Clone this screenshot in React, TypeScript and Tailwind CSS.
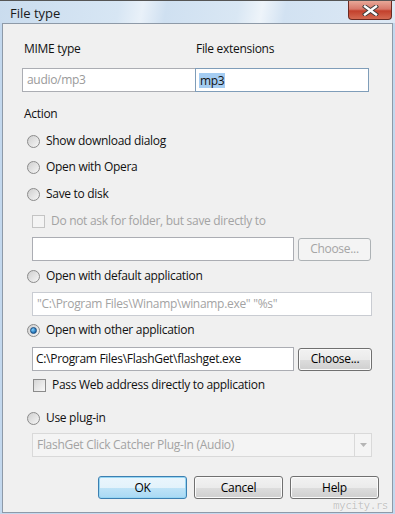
import React from 'react';

const font = "font-['Open_Sans',sans-serif]";

const Radio: React.FC<{ checked?: boolean }> = ({ checked }) => (
  <span className="relative flex h-[13px] w-[13px] shrink-0 items-center justify-center rounded-full border border-[#8b8b8b] bg-[linear-gradient(135deg,#cfcfcf,#f6f6f6)]">
    {checked && (
      <span className="h-[7px] w-[7px] rounded-full border border-[#1b4d80] bg-[radial-gradient(circle_at_35%_35%,#7fd0ff,#1f6fb2_70%)]" />
    )}
  </span>
);

const Check: React.FC<{ disabled?: boolean }> = ({ disabled }) => (
  <span
    className={`h-[13px] w-[13px] shrink-0 border ${
      disabled ? 'border-[#c4c4c4] bg-[#f4f4f4]' : 'border-[#8b8b8b] bg-[linear-gradient(135deg,#d6d6d6,#f8f8f8)]'
    }`}
  />
);

const Button: React.FC<{ label: string; disabled?: boolean; primary?: boolean; className?: string }> = ({
  label,
  disabled,
  primary,
  className = '',
}) => (
  <div
    className={`flex items-center justify-center rounded-[3px] border ${
      disabled
        ? 'border-[#adb2b5] bg-[#f4f4f4] text-[#a5a5a5]'
        : primary
        ? 'border-[#3c7fb1] bg-[linear-gradient(#eaf6fd_0%,#e3f2fb_50%,#bfe3f7_51%,#a9d9f4_100%)] text-black shadow-[inset_0_0_0_1px_#97d6f3]'
        : 'border-[#707070] bg-[linear-gradient(#f2f2f2_0%,#ebebeb_50%,#dddddd_51%,#cfcfcf_100%)] text-black shadow-[inset_0_0_0_1px_#fbfbfb]'
    } ${className}`}
  >
    {label}
  </div>
);

const RadioRow: React.FC<{ label: string; checked?: boolean; mt: string }> = ({ label, checked, mt }) => (
  <div className={`flex h-[16px] items-center ${mt} ml-[24px]`}>
    <Radio checked={checked} />
    <span className="ml-[6px] leading-none">{label}</span>
  </div>
);

export default function App() {
  return (
    <div className={`relative h-[514px] w-[395px] overflow-hidden bg-[#c3d8ee] text-[12px] tracking-[-0.3px] text-[#111] ${font}`}>
      {/* title bar */}
      <div className="flex h-[23px] items-start border-t border-[#555] bg-[linear-gradient(100deg,#cadcee_0%,#d7e6f4_30%,#e9f1f9_36%,#cfe0f1_42%,#d9e7f4_60%,#eef4fa_66%,#d2e2f2_72%,#dde9f5_100%)]">
        <span className="ml-[10px] mt-[6px] leading-none text-[13px] tracking-normal text-[#1a1a1a]">File type</span>
        <div className="ml-auto mr-[3px] flex h-[19px] w-[44px] items-center justify-center rounded-b-[4px] border border-t-0 border-[#6b2a22] bg-[linear-gradient(#e8a898_0%,#d7786a_45%,#c3402c_55%,#d46a52_100%)]">
          <svg width="17" height="11" viewBox="0 0 17 11">
            <path d="M3 1.5 L14 9.5 M14 1.5 L3 9.5" stroke="#3a3a3a" strokeWidth="4.2" strokeLinecap="square" />
            <path d="M3 1.5 L14 9.5 M14 1.5 L3 9.5" stroke="#ffffff" strokeWidth="2.4" strokeLinecap="square" />
          </svg>
        </div>
      </div>

      {/* body */}
      <div className="mx-[2px] flex h-[490px] flex-col border border-[#8e9aa8] bg-[#f0f0f0]">
        <div className="mt-[17px] flex h-[16px] items-center">
          <span className="ml-[21px] w-[172px] leading-none">MIME type</span>
          <span className="leading-none">File extensions</span>
        </div>

        <div className="ml-[19px] mt-[11px] flex h-[24px]">
          <div className="flex w-[173px] items-center border border-[#abadb3] border-r-0 bg-white pl-[4px] text-[#9a9a9a]">
            audio/mp3
          </div>
          <div className="flex w-[174px] items-center border border-[#7f9db9] bg-white pl-[3px]">
            <span className="bg-[#a5cdf2] px-[1px] leading-[15px]">mp3</span>
          </div>
        </div>

        <div className="ml-[21px] mt-[14px] flex h-[16px] items-center leading-none">Action</div>

        <RadioRow label="Show download dialog" mt="mt-[11px]" />
        <RadioRow label="Open with Opera" mt="mt-[10px]" />
        <RadioRow label="Save to disk" mt="mt-[11px]" />

        <div className="ml-[29px] mt-[11px] flex h-[16px] items-center text-[#a3a3a3]">
          <Check disabled />
          <span className="ml-[6px] leading-none">Do not ask for folder, but save directly to</span>
        </div>

        <div className="ml-[29px] mt-[8px] flex h-[24px] items-center">
          <div className="h-[24px] w-[262px] border border-[#abadb3] bg-white" />
          <Button label="Choose..." disabled className="ml-[4px] h-[23px] w-[73px]" />
        </div>

        <RadioRow label="Open with default application" mt="mt-[7px]" />

        <div className="ml-[29px] mt-[8px] flex h-[24px] w-[340px] items-center border border-[#c9ccd2] bg-white pl-[4px] text-[#a3a3a3]">
          "C:\Program Files\Winamp\winamp.exe" "%s"
        </div>

        <RadioRow label="Open with other application" checked mt="mt-[6px]" />

        <div className="ml-[29px] mt-[9px] flex h-[24px] items-center">
          <div className="flex h-[24px] w-[262px] items-center border border-[#abadb3] bg-white pl-[3px]">
            C:\Program Files\FlashGet\flashget.exe
          </div>
          <Button label="Choose..." className="ml-[4px] h-[23px] w-[74px]" />
        </div>

        <div className="ml-[30px] mt-[6px] flex h-[16px] items-center">
          <Check />
          <span className="ml-[6px] leading-none">Pass Web address directly to application</span>
        </div>

        <RadioRow label="Use plug-in" mt="mt-[17px]" />

        <div className="ml-[29px] mt-[7px] flex h-[24px] w-[340px] items-center border border-[#d9d9d9] bg-[#f4f4f4] text-[#a3a3a3]">
          <span className="pl-[4px]">FlashGet Click Catcher Plug-In (Audio)</span>
          <div className="ml-auto flex h-full w-[17px] items-center justify-center border-l border-[#d9d9d9]">
            <svg width="7" height="4" viewBox="0 0 7 4">
              <path d="M0 0 H7 L3.5 4 Z" fill="#b5b5b5" />
            </svg>
          </div>
        </div>

        <div className="ml-[95px] mt-[19px] flex h-[23px] gap-[7px]">
          <Button label="OK" primary className="w-[89px]" />
          <Button label="Cancel" className="w-[89px]" />
          <Button label="Help" className="w-[89px]" />
        </div>
      </div>

      <span className="absolute bottom-[3px] right-[7px] font-['DejaVu_Sans_Mono',monospace] text-[11px] leading-none tracking-[-0.5px] text-[#c4c4c4] [text-shadow:0_0_1px_#fff,0_0_1px_#fff]">
        mycity.rs
      </span>
    </div>
  );
}
